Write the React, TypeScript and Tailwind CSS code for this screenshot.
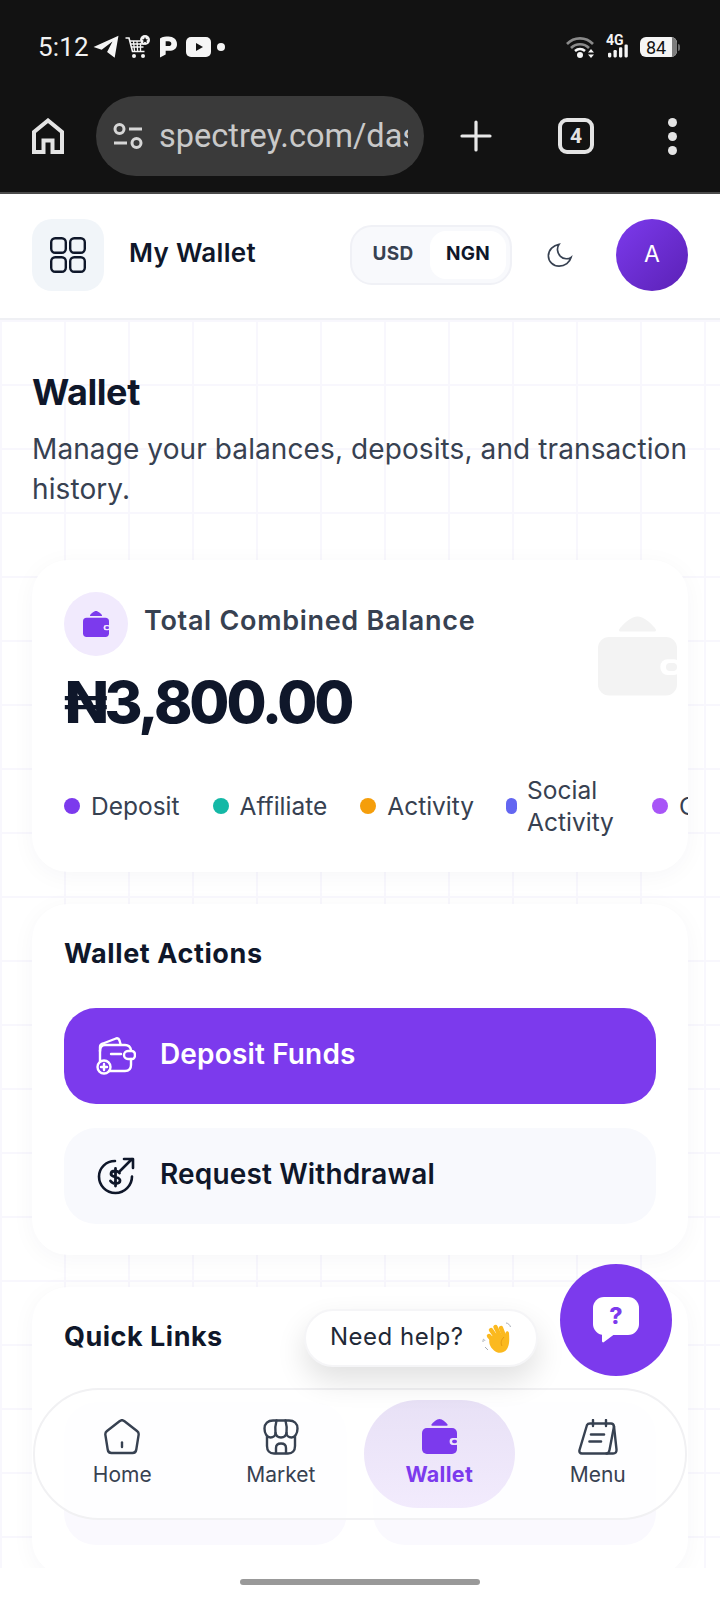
import React from "react";

const font = { fontFamily: "Inter, 'Noto Sans', sans-serif" };

function WalletFill({ className, fill, bg }: { className?: string; fill: string; bg: string }) {
  return (
    <svg viewBox="0 0 100 100" className={className}>
      <path d="M27 16 C31 10 42 0 50 0 C58 0 69 10 73 16 C74 18 73 19 71 19 H29 C27 19 26 18 27 16 Z" fill={fill} />
      <rect x="0" y="26" width="100" height="74" rx="14" fill={fill} />
      <rect x="79" y="54" width="26" height="20" rx="9" fill={bg} />
      <rect x="86" y="59" width="14" height="10" rx="5" fill={fill} />
    </svg>
  );
}

function Grid4() {
  return (
    <svg viewBox="0 0 36 36" className="w-9 h-9" fill="none" stroke="#0f172a" strokeWidth="2.4">
      <rect x="1.2" y="1.2" width="14.6" height="14.6" rx="4" />
      <rect x="20.2" y="1.2" width="14.6" height="14.6" rx="4" />
      <rect x="1.2" y="20.2" width="14.6" height="14.6" rx="4" />
      <rect x="20.2" y="20.2" width="14.6" height="14.6" rx="4" />
    </svg>
  );
}

function StatusLeft() {
  return (
    <div className="flex items-center">
      <span className="text-[26px] leading-none text-[#f2f2f2] tracking-[0.2px]" style={{ fontFamily: "Roboto, sans-serif" }}>5:12</span>
      <svg viewBox="0 0 24 24" className="w-[26px] h-[26px] ml-[4px]" fill="#f5f5f5">
        <path d="M0.5 12 L23.5 1.5 L20 22 L13 16.5 L18 7 L8 14.5 Z" />
      </svg>
      <svg viewBox="0 0 26 24" className="w-[26px] h-[24px] ml-[6px]" fill="none" stroke="#f5f5f5" strokeWidth="1.3">
        <path d="M0.5 3 H4 L7.5 16.5 H19.5" strokeWidth="1.6" />
        <path d="M5 6 H15 M5.8 9 H19 M6.6 12 H18.5 M8.5 6 L9.5 16 M12 6 L12.6 16 M15.5 8 L15.5 16" />
        <circle cx="9" cy="21" r="2" fill="#f5f5f5" stroke="none" />
        <circle cx="18" cy="21" r="2" fill="#f5f5f5" stroke="none" />
        <circle cx="20" cy="5" r="5" fill="#f5f5f5" stroke="none" />
        <path d="M20 2 L21 4.2 L23 4.4 L21.4 5.8 L22 8 L20 6.8 L18 8 L18.6 5.8 L17 4.4 L19 4.2 Z" fill="#121212" stroke="none" />
      </svg>
      <svg viewBox="0 0 18 22" className="w-[17px] h-[22px] ml-[9px]" fill="#f5f5f5">
        <path d="M0 2 C3 0 6 0 9 0 C14 0 18 3 18 8 C18 13 14 15 10 15 L6 15 L6 19 L0 22 Z M6 5 L6 10 L9 10 C11 10 12 9 12 7.5 C12 6 11 5 9 5 Z" fillRule="evenodd" />
      </svg>
      <svg viewBox="0 0 25 20" className="w-[25px] h-[20px] ml-[9px]">
        <rect x="0" y="0" width="25" height="20" rx="5" fill="#f5f5f5" />
        <path d="M10 6 L17 10 L10 14 Z" fill="#121212" />
      </svg>
      <span className="w-[8px] h-[8px] rounded-full bg-[#f5f5f5] ml-[6px]" />
    </div>
  );
}

function StatusRight() {
  return (
    <div className="flex items-center">
      <svg viewBox="0 0 28 22" className="w-[28px] h-[22px]" fill="none">
        <path d="M1 8 C8 0.5 20 0.5 27 8" stroke="#8a8a8a" strokeWidth="2.6" />
        <path d="M5 12 C10 7 18 7 23 12" stroke="#8a8a8a" strokeWidth="2.6" />
        <path d="M9 15 C12 12.5 16 12.5 19 15" stroke="#f5f5f5" strokeWidth="2.6" />
        <circle cx="14" cy="19" r="3" fill="#f5f5f5" />
        <path d="M25 13 L28 16.5 H22 Z M25 22 L22 18.5 H28 Z" fill="#f5f5f5" />
      </svg>
      <div className="ml-[12px] relative w-[24px] h-[22px]">
        <span className="absolute left-0 top-[-3px] text-[14px] leading-[14px] font-bold text-[#f5f5f5]" style={{ fontFamily: "Roboto, sans-serif" }}>4G</span>
        <svg viewBox="0 0 24 14" className="absolute left-[2px] bottom-0 w-[22px] h-[14px]" fill="#f5f5f5">
          <rect x="0" y="9" width="3.6" height="5" rx="1.2" />
          <rect x="6" y="6" width="3.6" height="8" rx="1.2" />
          <rect x="12" y="3" width="3.6" height="11" rx="1.2" />
          <rect x="18" y="0" width="3.6" height="14" rx="1.2" />
        </svg>
      </div>
      <div className="ml-[10px] flex items-center">
        <div className="w-[37px] h-[20px] rounded-[6px] bg-[#f5f5f5] overflow-hidden flex">
          <span className="w-[32px] text-center text-[18px] leading-[21px] text-[#121212]" style={{ fontFamily: "Roboto, sans-serif" }}>84</span>
          <span className="w-[5px] bg-[#7d7d7d]" />
        </div>
        <span className="w-[2px] h-[7px] ml-[1px] bg-[#6d6d6d] rounded-r" />
      </div>
    </div>
  );
}

function Chrome() {
  return (
    <div className="bg-[#121212] h-[194px] border-b-2 border-[#4b4b4b] shrink-0">
      <div className="flex items-center justify-between pl-[38px] pr-[40px] h-[96px] pb-[2px]">
        <StatusLeft />
        <StatusRight />
      </div>
      <div className="flex items-center h-[80px]">
        <svg viewBox="0 0 32 36" className="w-[32px] h-[36px] ml-[32px]" fill="none" stroke="#e4e4e4" strokeWidth="4">
          <path d="M2 34 V14 L16 2.5 L30 14 V34 H20.5 V22.5 H11.5 V34 Z" />
        </svg>
        <div className="ml-[32px] w-[328px] h-[80px] rounded-[40px] bg-[#3a3a3a] flex items-center pl-[17px]">
          <svg viewBox="0 0 30 28" className="w-[30px] h-[28px] shrink-0" fill="none" stroke="#d6d6d6" strokeWidth="3">
            <circle cx="6.5" cy="7" r="4.5" />
            <path d="M16 7 H29 M1 21 H14" />
            <circle cx="23.5" cy="21" r="4.5" />
          </svg>
          <div className="ml-[16px] w-[249px] overflow-hidden whitespace-nowrap text-[32.5px] leading-[40px] text-[#c9c9c9]" style={{ fontFamily: "Roboto, sans-serif" }}>
            spectrey.com/dashboard
          </div>
        </div>
        <svg viewBox="0 0 32 32" className="w-[32px] h-[32px] ml-[36px]" stroke="#e8e8e8" strokeWidth="3.2" strokeLinecap="round">
          <path d="M16 2 V30 M2 16 H30" />
        </svg>
        <div className="ml-[66px] w-[36px] h-[36px] rounded-[9px] border-[4px] border-[#e4e4e4] flex items-center justify-center text-[21px] font-bold leading-none text-[#e4e4e4]" style={{ fontFamily: "Roboto, sans-serif" }}>
          4
        </div>
        <div className="ml-[74px] flex flex-col gap-[5px]">
          <span className="w-[9px] h-[9px] rounded-full bg-[#e4e4e4]" />
          <span className="w-[9px] h-[9px] rounded-full bg-[#e4e4e4]" />
          <span className="w-[9px] h-[9px] rounded-full bg-[#e4e4e4]" />
        </div>
      </div>
    </div>
  );
}

function Header() {
  return (
    <div className="bg-white h-[126px] border-b-2 border-[#eff0f4] shrink-0 flex items-center pl-[32px] pr-[32px] pb-[2px] relative z-10" style={font}>
      <div className="w-[72px] h-[72px] rounded-[20px] bg-[#f1f5f9] flex items-center justify-center">
        <Grid4 />
      </div>
      <span className="ml-[25px] -mt-[6px] text-[26px] font-semibold text-[#0f172a] tracking-[0.3px]">My Wallet</span>
      <div className="ml-auto w-[162px] h-[60px] rounded-[22px] bg-[#f8f9fc] border-2 border-[#f0f1f6] flex items-center pl-[4px] pr-[4px]">
        <span className="w-[75px] -mt-[2px] text-center text-[19px] font-bold text-[#374151] tracking-[0.3px]">USD</span>
        <span className="w-[77px] h-[48px] pb-[2px] rounded-[16px] bg-white flex items-center justify-center text-[19px] font-bold text-[#0f172a] tracking-[0.3px]">NGN</span>
      </div>
      <svg viewBox="0 0 28 26" className="w-[26px] h-[26px] ml-[35px] mr-[43px]" fill="none" stroke="#374151" strokeWidth="1.8">
        <path d="M13 1.5 C7 2.5 1.5 7 1.5 14 C1.5 20 6.5 25 13 25 C19.5 25 24.5 21 26 15.5 C23.5 17.5 18 18 14.5 14.5 C10.5 10.5 10.5 5 13 1.5 Z" />
      </svg>
      <div className="w-[72px] h-[72px] pb-[2px] rounded-full bg-gradient-to-br from-[#7c3aed] to-[#5b21b6] flex items-center justify-center text-white text-[23px]">A</div>
    </div>
  );
}

function Dot({ color, w = "w-[16px]" }: { color: string; w?: string }) {
  return <span className={`${w} h-[16px] rounded-full shrink-0`} style={{ backgroundColor: color }} />;
}

function LegendItem({ color, label }: { color: string; label: string }) {
  return (
    <div className="flex items-center gap-[11px] shrink-0 whitespace-nowrap">
      <Dot color={color} />
      <span>{label}</span>
    </div>
  );
}

function BalanceCard() {
  return (
    <div className="relative mt-[51px] h-[312px] rounded-[36px] bg-white shadow-[0_4px_24px_rgba(30,30,80,0.04)] overflow-hidden pt-[32px] pl-[32px]">
      <div className="flex items-center gap-[16px]">
        <div className="w-[64px] h-[64px] rounded-full bg-[#f1eafd] flex items-center justify-center">
          <WalletFill className="w-[26px] h-[26px]" fill="#7c3aed" bg="#f1eafd" />
        </div>
        <span className="text-[27px] font-semibold text-[#374151] tracking-[0.7px] -mt-[6px]">Total Combined Balance</span>
      </div>
      <div className="mt-[10px] text-[58px] leading-[72px] font-extrabold text-[#0f172a] tracking-[-3.1px]">₦3,800.00</div>
      <div className="mt-[36px] h-[64px] flex items-center text-[24.5px] leading-[32px] text-[#374151] w-[780px]">
        <LegendItem color="#7c3aed" label="Deposit" />
        <div className="ml-[33px]"><LegendItem color="#14b8a6" label="Affiliate" /></div>
        <div className="ml-[33px]"><LegendItem color="#f59e0b" label="Activity" /></div>
        <div className="ml-[32px] flex items-center gap-[10px] shrink-0">
          <Dot color="#6366f1" w="w-[11px]" />
          <span className="w-[90px]">Social Activity</span>
        </div>
        <div className="ml-[35px]"><LegendItem color="#a855f7" label="Cashback" /></div>
      </div>
      <WalletFill className="absolute right-[11px] top-[56px] w-[79px] h-[80px]" fill="#f3f3f3" bg="#ffffff" />
    </div>
  );
}

function ActionsCard() {
  return (
    <div className="mt-[32px] h-[351px] rounded-[36px] bg-white shadow-[0_4px_24px_rgba(30,30,80,0.04)] pt-[32px] px-[32px]">
      <div className="text-[27px] leading-[36px] font-bold text-[#0f172a] tracking-[0.6px]">Wallet Actions</div>
      <div className="mt-[36px] h-[96px] rounded-[32px] bg-[#7c3aed] flex items-center pl-[32px] text-white">
        <svg viewBox="0 0 40 38" className="w-[40px] h-[38px]" fill="none" stroke="#ffffff" strokeWidth="2.4" strokeLinecap="round" strokeLinejoin="round">
          <path d="M4 14 V10 C4 8 5 7 7 6.5 L20 1.5 C21.5 1 23 2 23.5 3.5 L24.5 7" />
          <path d="M4 14 C4 10 6 8 9 8 H29 C32.5 8 34.5 10 35 13" />
          <path d="M4 14 V24" />
          <path d="M15 17 H25" />
          <path d="M35 13 V14 H32 C29.5 14 28 16 28 18 C28 20 29.5 22 32 22 H36.5 C38 22 39 20 39 18 C39 16 38 14 36 14" />
          <path d="M35 22 V28 C35 32 33 34 29 34 H13" />
          <circle cx="8" cy="30" r="6.5" />
          <path d="M8 27 V33 M5 30 H11" />
        </svg>
        <span className="ml-[24px] -mt-[4px] text-[28px] font-semibold tracking-[0.15px]">Deposit Funds</span>
      </div>
      <div className="mt-[24px] h-[96px] rounded-[32px] bg-[#f8f9fd] flex items-center pl-[33px] text-[#0f172a]">
        <svg viewBox="0 0 38 38" className="w-[38px] h-[38px]" fill="none" stroke="#0f172a" strokeWidth="2.6" strokeLinecap="round" strokeLinejoin="round">
          <path d="M18 4 C9 4 2 11 2 19.5 C2 28.5 9 36 18.5 36 C27.5 36 35 28.5 35 19.5" />
          <path d="M23 14 L35 2 M27 2 H36 V11" />
          <path d="M22.5 16 C21.5 14.5 20 14 18 14 C15.5 14 14 15.2 14 17 C14 21 23 19 23 23.5 C23 25.3 21.5 26.5 18.5 26.5 C16 26.5 14.5 25.5 13.5 24 M18.5 11.5 V29" strokeWidth="2.8" />
        </svg>
        <span className="ml-[25px] -mt-[5px] text-[28px] font-semibold tracking-[0.15px]">Request Withdrawal</span>
      </div>
    </div>
  );
}

function QuickLinksCard() {
  return (
    <div className="mt-[32px] h-[289px] rounded-[36px] bg-white shadow-[0_4px_24px_rgba(30,30,80,0.04)] pt-[32px] px-[32px] shrink-0">
      <div className="text-[27px] leading-[36px] font-bold text-[#0f172a] tracking-[0.5px]">Quick Links</div>
      <div className="mt-[47px] grid grid-cols-2 gap-[26px]">
        <div className="h-[143px] rounded-[32px] bg-[#faf9fe]" />
        <div className="h-[143px] rounded-[32px] bg-[#faf9fe]" />
      </div>
    </div>
  );
}

function NavItem({ label, active, children }: { label: string; active?: boolean; children: React.ReactNode }) {
  return (
    <div className={`mx-[4px] my-[10px] rounded-[54px] flex flex-col items-center pt-[19px] ${active ? "bg-gradient-to-b from-[#e8e1f6] to-[#f2ebfd]" : ""}`}>
      {children}
      <span className={`mt-[6px] leading-[28px] ${active ? "text-[21.5px] font-bold text-[#7c3aed] tracking-[0.3px]" : "text-[21px] text-[#374151]"}`}>{label}</span>
    </div>
  );
}

function BottomNav() {
  return (
    <div className="absolute left-[33px] top-[1388px] w-[654px] h-[132px] rounded-[66px] bg-white/90 border-2 border-[#f1f1f3] grid grid-cols-4 px-[8px]" style={font}>
      <NavItem label="Home">
        <svg viewBox="0 0 36 36" className="w-[36px] h-[36px]" fill="none" stroke="#374151" strokeWidth="2.4" strokeLinecap="round">
          <path d="M15.5 2.2 C17 1 19 1 20.5 2.2 L33 12 C34.3 13 34.9 14.4 34.6 16 L32.3 30.5 C32 32.8 30.8 34 28.5 34 H7.5 C5.2 34 4 32.8 3.7 30.5 L1.4 16 C1.1 14.4 1.7 13 3 12 Z" />
          <path d="M18 23.5 V28" />
        </svg>
      </NavItem>
      <NavItem label="Market">
        <svg viewBox="0 0 36 36" className="w-[36px] h-[36px]" fill="none" stroke="#374151" strokeWidth="2.4" strokeLinecap="round" strokeLinejoin="round">
          <path d="M10 1.5 H26 C31 1.5 34.5 4.5 34.5 9.5 C34.5 14.5 32 18.5 28.5 18.5 C25.5 18.5 23.5 16.5 23.5 14 C23 16.5 21 18.5 18 18.5 C15 18.5 13 16.5 12.5 14 C12.5 16.5 10.5 18.5 7.5 18.5 C4 18.5 1.5 14.5 1.5 9.5 C1.5 4.5 5 1.5 10 1.5 Z" />
          <path d="M12.5 14 C12 9 12.5 5 13.5 1.5 M23.5 14 C24 9 23.5 5 22.5 1.5" />
          <path d="M4 17 V27 C4 31.5 6.5 34.5 11 34.5 H25 C29.5 34.5 32 31.5 32 27 V17" />
          <path d="M13 34 V29 C13 26 15 24.5 18 24.5 C21 24.5 23 26 23 29 V34" />
        </svg>
      </NavItem>
      <NavItem label="Wallet" active>
        <WalletFill className="w-[35px] h-[35px]" fill="#7c3aed" bg="#ece5f9" />
      </NavItem>
      <NavItem label="Menu">
        <svg viewBox="0 0 40 36" className="w-[40px] h-[36px]" fill="none" stroke="#374151" strokeWidth="2.4" strokeLinecap="round" strokeLinejoin="round">
          <path d="M9 6 C9.5 5 10.5 4.5 12 4.5 H33 C35 4.5 35.8 6 36 7.5 L38.5 30.5 C38.7 33 37.5 34.5 35 34.5 H4 C2 34.5 1 33 1.5 31 Z" />
          <path d="M36 7.5 L31.5 31 C31 33.5 30 34.5 28.5 34.5" />
          <path d="M15 1 V7 M28 1 V7" />
          <path d="M13 15.5 H26 M11.5 22.5 H23" strokeWidth="2.6" />
        </svg>
      </NavItem>
    </div>
  );
}

function HelpPill() {
  return (
    <div className="absolute left-[304px] top-[1309px] w-[234px] h-[58px] rounded-[29px] bg-white border-2 border-[#f5f5f7] shadow-[0_14px_30px_rgba(0,0,0,0.12)] flex items-center pl-[24px]" style={font}>
      <span className="-mt-[2px] text-[24px] text-[#1f2937] tracking-[0.5px] whitespace-nowrap">Need help?</span>
      <svg viewBox="0 0 30 32" className="w-[30px] h-[32px] ml-[19px] shrink-0" fill="none">
        <path d="M1 20 C1 16 2 17 3 19 M3 25 C4 26 5 27 6 28" stroke="#a8adb5" strokeWidth="1" />
        <path d="M24 1 C26 1 28 3 28.5 5" stroke="#a8adb5" strokeWidth="1" />
        <g stroke="#fbb91f" strokeWidth="4.4" strokeLinecap="round">
          <path d="M7 14 L14 22" />
          <path d="M9 8 L16 18" />
          <path d="M13.5 5 L19 16" />
          <path d="M19 6 L22.5 15" />
        </g>
        <path d="M8 16 C6 20 8 25 12 28.5 C16 32 22 31.5 25 27 C27.5 23 27.5 18 27 11 C26.5 8.5 24 9 23.5 11 L22 15 L14 11 Z" fill="#fbb91f" />
        <path d="M22 15 C19 18 18.5 21 20 24" stroke="#e39a12" strokeWidth="1" />
      </svg>
    </div>
  );
}

function Fab() {
  return (
    <div className="absolute left-[560px] top-[1264px] w-[112px] h-[112px] rounded-full bg-[#7c3aed] flex items-center justify-center">
      <div className="relative w-[46px] h-[38px] -mt-[8px] rounded-[11px] bg-white flex items-center justify-center text-[#7c3aed] text-[23px] font-extrabold leading-none" style={font}>
        ?
        <svg viewBox="0 0 14 10" className="absolute left-[9px] top-[36px] w-[14px] h-[10px]" fill="#ffffff">
          <path d="M0 0 H14 L2 9 C1 10 0 9 0 8 Z" />
        </svg>
      </div>
    </div>
  );
}

export default function App() {
  return (
    <div className="relative w-[720px] h-[1600px] overflow-hidden bg-white flex flex-col" style={font}>
      <Chrome />
      <Header />
      <main className="flex-1 min-h-0 overflow-hidden px-[32px] pt-[48px] bg-white bg-[linear-gradient(to_right,#f8f7fd_2px,transparent_2px),linear-gradient(to_bottom,#f8f7fd_2px,transparent_2px)] bg-[size:64px_64px]">
        <h1 className="text-[36px] leading-[48px] font-bold text-[#0f172a] tracking-[-0.4px]">Wallet</h1>
        <p className="mt-[13px] text-[28px] leading-[40px] text-[#374151] tracking-[0.1px]">Manage your balances, deposits, and transaction history.</p>
        <BalanceCard />
        <ActionsCard />
        <QuickLinksCard />
      </main>
      <div className="h-[32px] bg-white shrink-0 flex items-center justify-center relative z-10">
        <span className="w-[240px] h-[6px] rounded-full bg-[#999999] mb-[4px]" />
      </div>
      <BottomNav />
      <HelpPill />
      <Fab />
    </div>
  );
}
